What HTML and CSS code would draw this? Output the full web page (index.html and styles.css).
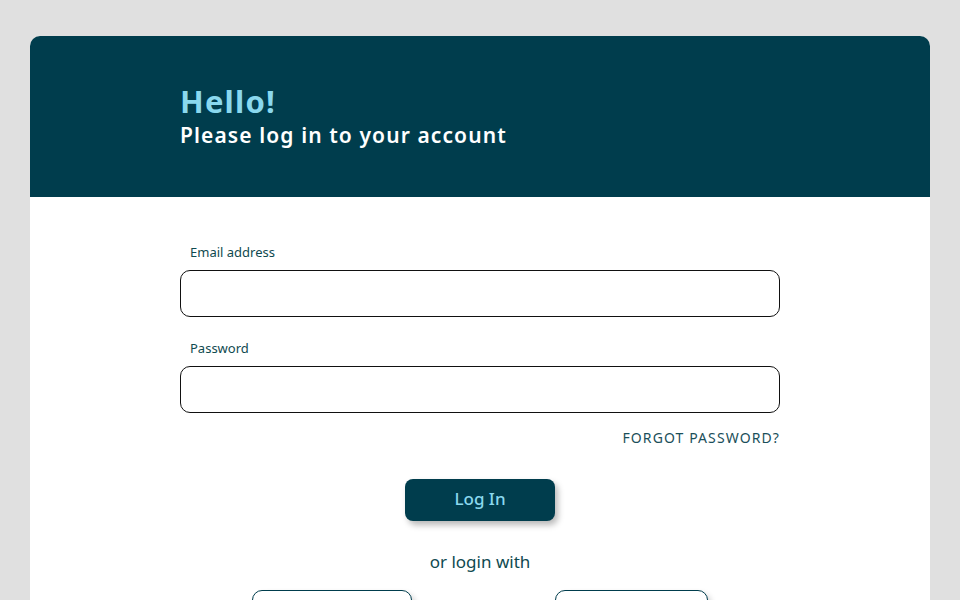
FILE: index.html
```html
<!DOCTYPE html>
<html>
<head>
<meta charset="utf-8">
<link rel="stylesheet" href="styles.css">
</head>
<body>
<main class="card">
  <header class="card-header">
    <h1 class="hello">Hello!</h1>
    <p class="subtitle">Please log in to your account</p>
  </header>
  <section class="card-body">
    <form class="form">
      <label class="label" for="email">Email address</label>
      <input class="input" id="email" type="email">
      <label class="label label-pw" for="pw">Password</label>
      <input class="input" id="pw" type="password">
      <div class="forgot-row"><a class="forgot" href="#">FORGOT PASSWORD?</a></div>
      <div class="btn-row"><button type="button" class="btn-login">Log In</button></div>
      <p class="or">or login with</p>
      <div class="socials">
        <button type="button" class="social social-a"></button>
        <button type="button" class="social social-b"></button>
      </div>
    </form>
  </section>
</main>
</body>
</html>
```
FILE: styles.css
```css
* { box-sizing: border-box; }
html, body { margin: 0; padding: 0; }
body {
  background: #e0e0e0;
  font-family: "Noto Sans", "Open Sans", sans-serif;
  height: 600px;
  overflow: hidden;
  padding: 36px 30px 0;
}
.card {
  background: #fff;
  border-radius: 10px 10px 0 0;
  height: 564px;
  overflow: hidden;
}
.card-header {
  background: #003d4d;
  height: 161px;
  padding: 45px 150px 0;
}
.hello {
  margin: 0;
  color: #8ad8ee;
  font-size: 31px;
  font-weight: 700;
  line-height: 40px;
  letter-spacing: 1.2px;
}
.subtitle {
  margin: 1px 0 0;
  color: #fff;
  font-size: 21px;
  font-weight: 600;
  line-height: 26px;
  letter-spacing: 1.1px;
}
.card-body {
  padding: 46px 150px 0;
}
.form {
  display: flex;
  flex-direction: column;
}
.label {
  color: #0f4a50;
  font-size: 13px;
  line-height: 18px;
  padding-left: 10px;
  margin-bottom: 9px;
}
.label-pw { margin-top: 22px; }
.input {
  height: 47px;
  border: 1px solid #111;
  border-radius: 10px;
  font: inherit;
  padding: 0 14px;
  background: #fff;
}
.forgot-row {
  display: flex;
  justify-content: flex-end;
  margin-top: 16px;
}
.forgot {
  color: #1b4f5a;
  font-size: 14px;
  line-height: 18px;
  letter-spacing: 1.1px;
  margin-right: 0;
  text-decoration: none;
}
.btn-row {
  display: flex;
  justify-content: center;
  margin-top: 32px;
}
.btn-login {
  width: 150px;
  height: 42px;
  padding: 0 0 3px;
  background: #003d4d;
  color: #8ad8ee;
  border: none;
  border-radius: 8px;
  font: inherit;
  font-size: 17px;
  font-weight: 500;
  box-shadow: 3px 4px 6px rgba(0,0,0,0.28);
}
.or {
  margin: 30px 0 0;
  text-align: center;
  color: #0f4a50;
  font-size: 17px;
  line-height: 22px;
}
.socials {
  display: flex;
  justify-content: center;
  gap: 143px;
  margin-top: 17px;
}
.social {
  height: 44px;
  background: #fff;
  border: 1px solid #003d4d;
  border-radius: 10px;
  box-shadow: 3px 4px 6px rgba(0,0,0,0.2);
}
.social-a { width: 160px; }
.social-b { width: 153px; }
```
